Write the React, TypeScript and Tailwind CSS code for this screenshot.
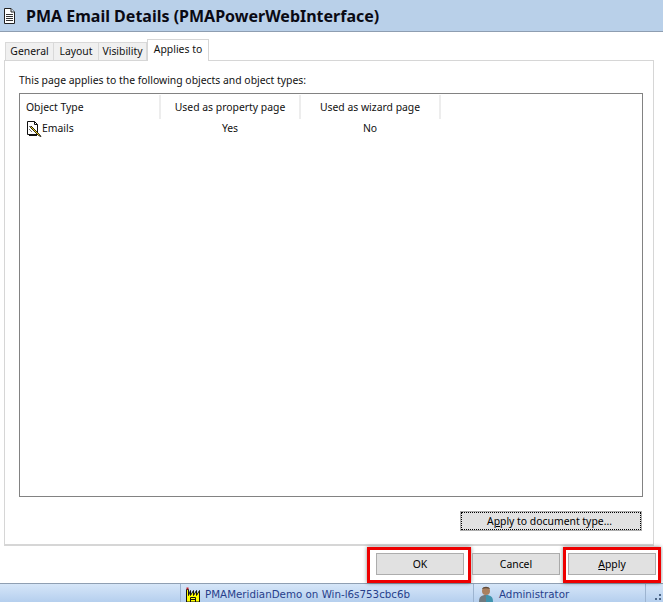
import type { ReactNode } from "react"

const sans = "font-['Noto_Sans',Arial,sans-serif]"

function PageIcon() {
  return (
    <svg width="11" height="16" viewBox="0 0 11 16" className="shrink-0">
      <path d="M.5.5h6.500l3.500 3.500v11.500h-10z" fill="#fff" stroke="#222" />
      <path d="M7 .5v3.500h3.500" fill="#dfe8f2" stroke="#222" />
      <path d="M2 6.500h7M2 8.500h7M2 10.500h7M2 12.500h7" stroke="#333" />
    </svg>
  )
}

function EmailIcon() {
  return (
    <svg width="16" height="16" viewBox="0 0 16 16" className="shrink-0">
      <path d="M1.500.5h7l3 3v10h-10z" fill="#fff" stroke="#111" />
      <path d="M8.500.5v3h3" fill="none" stroke="#111" />
      <path d="M3 5l5 5M3 8l3 3" stroke="#777" />
      <path d="M5 5l8 8 2 2.500-2.500-1-8-8z" fill="#f3d31c" stroke="#111" strokeWidth="0.9" />
      <path d="M3 14.500h8" stroke="#111" />
    </svg>
  )
}

function PlantIcon() {
  return (
    <svg width="14" height="15" viewBox="0 0 14 15" className="shrink-0 self-end">
      <path d="M.5 15V2.500h2v6l2-5v5l3-5v5l3-5v5l3-5V15z" fill="#ffff00" stroke="#111" />
      <path d="M4.500 10.500h5V15h-5z" fill="#ffff00" stroke="#111" />
      <path d="M5 12.500h4" stroke="#111" />
      <path d="M.5.500h2v2h-2z" fill="#c8202a" />
    </svg>
  )
}

function UserIcon() {
  return (
    <svg width="16" height="16" viewBox="0 0 16 16" className="shrink-0 self-end">
      <circle cx="8" cy="5" r="4" fill="#a9805f" />
      <path d="M4 3c1-3 7-3 8 0-3-1-5-1-8 0z" fill="#5f4a3a" />
      <path d="M1 16c0-5 2-7 7-7v7z" fill="#707a80" />
      <path d="M15 16c0-5-2-7-7-7v7z" fill="#3f93ad" />
    </svg>
  )
}

function Tab({ children, active, className }: { children: ReactNode; active?: boolean; className: string }) {
  if (active) {
    return (
      <div className={`relative z-10 -mb-px flex h-[22px] items-center justify-center border border-b-0 border-[#d6d6d6] bg-white pb-px ${className}`}>
        {children}
      </div>
    )
  }
  return (
    <div className={`flex h-[18px] items-center justify-center border border-b-0 border-l-0 border-[#d9d9d9] bg-[#f0f0f0] pt-px first:border-l ${className}`}>
      {children}
    </div>
  )
}

function Column({ label, className }: { label: string; className: string }) {
  return <div className={`flex h-6 items-center border-r-2 border-[#ededed] pt-[2px] ${className}`}>{label}</div>
}

function ActionButton({ children, annotation }: { children: ReactNode; annotation?: string }) {
  return (
    <button className="relative h-[22px] w-[88px] border border-[#adadad] bg-[#e1e1e1] pt-[2px] text-[10.4px] text-black">
      {children}
      {annotation && (
        <span className={`absolute border-[3px] border-[#ee0000] shadow-[0_0_4px_rgba(0,0,0,0.45)] ${annotation}`} />
      )}
    </button>
  )
}

export default function App() {
  return (
    <div className={`flex h-[602px] w-[663px] flex-col overflow-hidden bg-white text-[10.4px] text-[#111] ${sans}`}>
      <header className="flex h-8 shrink-0 items-center gap-[11px] border-b border-[#8e9eb1] bg-[#b9d0e9] pl-[4px]">
        <PageIcon />
        <h1 className="text-[16px] font-bold text-[#0a0a14]">PMA Email Details (PMAPowerWebInterface)</h1>
      </header>

      <div className="flex min-h-0 flex-1 flex-col pl-1 pr-[9px] pt-[7px]">
        <div className="flex items-end pl-px">
          <Tab className="w-[49px]">General</Tab>
          <Tab className="w-[45px]">Layout</Tab>
          <Tab className="w-[48px]">Visibility</Tab>
          <Tab active className="w-[62px]">Applies to</Tab>
        </div>

        <section className="flex h-[486px] flex-col border border-b-2 border-[#d6d6d6] bg-white pl-[14px] pr-[10px] pt-[12px]">
          <p className="leading-[14px]">This page applies to the following objects and object types:</p>
          <div className="mt-[6px] h-[404px] shrink-0 border border-[#828282]">
            <div className="flex pt-px">
              <Column label="Object Type" className="w-[141px] pl-[6px]" />
              <Column label="Used as property page" className="w-[140px] justify-center" />
              <Column label="Used as wizard page" className="w-[140px] justify-center" />
            </div>
            <div className="flex h-[18px] items-center pt-[2px]">
              <div className="flex w-[141px] items-center pl-[6px]">
                <EmailIcon />
                <span>Emails</span>
              </div>
              <div className="w-[140px] pr-[2px] text-center">Yes</div>
              <div className="w-[140px] pr-[2px] text-center">No</div>
            </div>
          </div>
          <div className="mt-[14px] flex justify-end pr-px">
            <button className="h-5 w-[182px] border border-[#adadad] bg-[#e1e1e1] pr-[3px] pt-[2px] text-black outline-1 -outline-offset-2 outline-dotted outline-black">
              A<span className="underline">p</span>ply to document type...
            </button>
          </div>
        </section>
      </div>

      <div className="flex h-[37px] shrink-0 items-start justify-end gap-2 pr-[7px] pt-[7px]">
        <ActionButton annotation="-bottom-[9px] -left-[10px] -right-[8px] -top-[7px]">OK</ActionButton>
        <ActionButton>Cancel</ActionButton>
        <ActionButton annotation="-bottom-[9px] -left-[6px] -right-[6px] -top-[7px]">
          <span className="underline">A</span>pply
        </ActionButton>
      </div>

      <footer className="flex h-[19px] shrink-0 border-t border-[#8f9fb2] bg-gradient-to-b from-[#d6e6f8] to-[#b5cfee] font-['DejaVu_Sans',sans-serif] text-[10.3px] text-[#27408b]">
        <div className="h-full w-[181px] border-r border-[#9db4d0]" />
        <div className="flex h-full w-[293px] items-center gap-[5px] border-r border-[#9db4d0] pl-[5px] pt-[4px]">
          <PlantIcon />
          <span>PMAMeridianDemo on Win-l6s753cbc6b</span>
        </div>
        <div className="flex h-full w-[172px] items-center gap-[5px] border-r border-[#9db4d0] pl-[4px] pt-[4px]">
          <UserIcon />
          <span>Administrator</span>
        </div>
        <div className="ml-auto grid grid-cols-2 gap-[2px] self-end pb-[2px] pr-[2px]">
          <span className="col-start-2 size-[2px] bg-[#4d6788]" />
          <span className="size-[2px] bg-[#4d6788]" />
          <span className="size-[2px] bg-[#4d6788]" />
        </div>
      </footer>
    </div>
  )
}
